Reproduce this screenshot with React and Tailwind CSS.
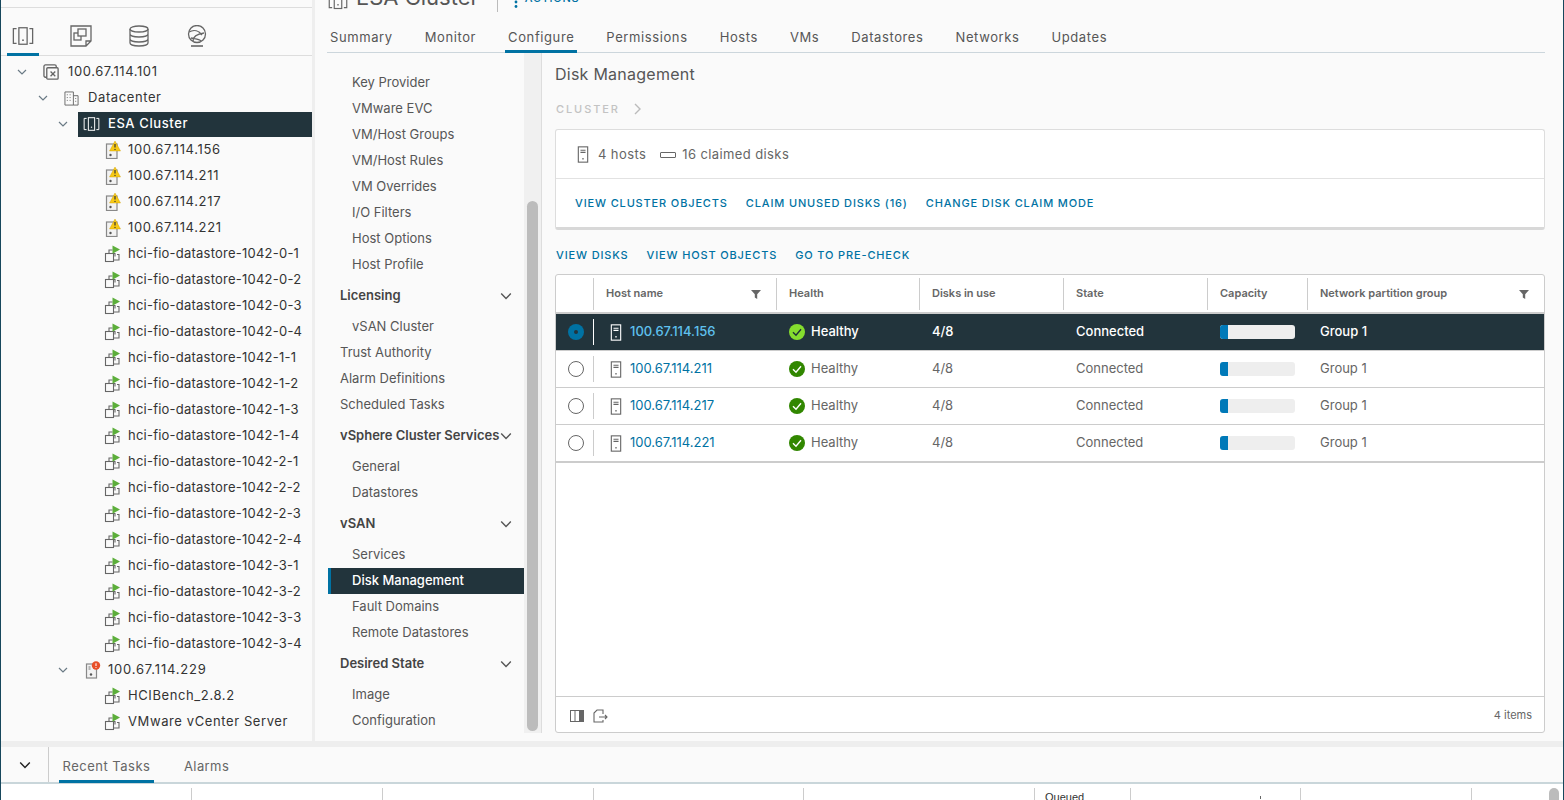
import React from "react";

const font = { fontFamily: '"Inter", "Open Sans", sans-serif' };

const Chevron = ({ className = "w-[10px] h-[10px] text-[#6a7a85]" }) => (
  <svg viewBox="0 0 10 10" className={className} fill="none" stroke="currentColor" strokeWidth="1.2">
    <path d="M1 3l4 4 4-4" />
  </svg>
);

const Host = ({ className = "w-[14px] h-[20px] text-[#666]" }) => (
  <svg viewBox="0 0 14 20" className={className} fill="none" stroke="currentColor" strokeWidth="1.3">
    <rect x="1.5" y="1" width="11" height="18" />
    <path d="M4 5h6M4 7.5h6" />
    <circle cx="7" cy="15" r="1" fill="currentColor" stroke="none" />
  </svg>
);

const ClusterIcon = ({ className, color = "#666" }) => (
  <svg viewBox="0 0 24 20" className={className} fill="none" stroke={color} strokeWidth="1.4">
    <rect x="7.5" y="1" width="9" height="18" />
    <circle cx="12" cy="14.5" r="1" fill={color} stroke="none" />
    <path d="M5 2H1.5v16H5M19 2h3.5v16H19" />
  </svg>
);

const WarnHost = () => (
  <svg viewBox="0 0 18 18" className="w-[18px] h-[18px]">
    <rect x="2.5" y="3" width="10.5" height="14.5" fill="#f2f2f2" stroke="#888" strokeWidth="1.2" />
    <circle cx="6.5" cy="14" r="1.2" fill="#555" />
    <path d="M11 0l5.5 10h-11z" fill="#f7c914" stroke="#c99a00" strokeWidth="0.4" />
    <path d="M11 3v3.6" stroke="#333" strokeWidth="1.2" />
    <circle cx="11" cy="8.4" r="0.7" fill="#333" />
  </svg>
);

const ErrorHost = () => (
  <svg viewBox="0 0 18 18" className="w-[18px] h-[18px]">
    <rect x="2.5" y="3" width="10" height="14" fill="#f2f2f2" stroke="#888" strokeWidth="1.2" />
    <path d="M4.5 6h2M4.5 8h2" stroke="#777" />
    <circle cx="7" cy="13.5" r="1.2" fill="#555" />
    <circle cx="12" cy="4.5" r="4.2" fill="#e8502a" />
    <path d="M12 2.2v2.8" stroke="#fff" strokeWidth="1.1" />
    <circle cx="12" cy="6.5" r="0.6" fill="#fff" />
  </svg>
);

const VmIcon = () => (
  <svg viewBox="0 0 18 18" className="w-[18px] h-[18px]" fill="none">
    <path d="M5 8V5h3.5M13 9.5h2V15H9.5" stroke="#666" strokeWidth="1.1" />
    <rect x="1.5" y="8.5" width="8" height="8" fill="#fafafa" stroke="#666" strokeWidth="1.1" />
    <path d="M5 8.5h6v3" stroke="#666" strokeWidth="1.1" />
    <path d="M8.5 0.5l7.5 4-7.5 4.2z" fill="#5cae3a" />
  </svg>
);

const HealthIcon = ({ light }) => (
  <svg viewBox="0 0 16 16" className="w-[16px] h-[16px]">
    <circle cx="8" cy="8" r="8" fill={light ? "#85dd2e" : "#318700"} />
    <path d="M4 8.2l3 3 5-6" fill="none" stroke={light ? "#1f2f38" : "#fff"} strokeWidth="1.4" />
  </svg>
);

const Filter = () => (
  <svg viewBox="0 0 10 10" className="w-[10px] h-[10px]" fill="#666">
    <path d="M0 1h10L6.2 5.2V10L3.8 8.6V5.2z" />
  </svg>
);

const tree = [
  { label: "100.67.114.156", icon: <WarnHost />, track: "tracking-[0.65px]" },
  { label: "100.67.114.211", icon: <WarnHost />, track: "tracking-[0.65px]" },
  { label: "100.67.114.217", icon: <WarnHost />, track: "tracking-[0.65px]" },
  { label: "100.67.114.221", icon: <WarnHost />, track: "tracking-[0.65px]" },
  ...[
    "0-1", "0-2", "0-3", "0-4", "1-1", "1-2", "1-3", "1-4",
    "2-1", "2-2", "2-3", "2-4", "3-1", "3-2", "3-3", "3-4",
  ].map((n) => ({ label: "hci-fio-datastore-1042-" + n, icon: <VmIcon />, track: "tracking-[0.23px]" })),
];

const tabs = ["Summary", "Monitor", "Configure", "Permissions", "Hosts", "VMs", "Datastores", "Networks", "Updates"];

const nav = [
  { label: "Key Provider" },
  { label: "VMware EVC" },
  { label: "VM/Host Groups" },
  { label: "VM/Host Rules" },
  { label: "VM Overrides" },
  { label: "I/O Filters" },
  { label: "Host Options" },
  { label: "Host Profile" },
  { label: "Licensing", head: true },
  { label: "vSAN Cluster" },
  { label: "Trust Authority", top: true },
  { label: "Alarm Definitions", top: true },
  { label: "Scheduled Tasks", top: true },
  { label: "vSphere Cluster Services", head: true },
  { label: "General" },
  { label: "Datastores" },
  { label: "vSAN", head: true },
  { label: "Services" },
  { label: "Disk Management", active: true },
  { label: "Fault Domains" },
  { label: "Remote Datastores" },
  { label: "Desired State", head: true },
  { label: "Image" },
  { label: "Configuration" },
];

const rows = ["100.67.114.156", "100.67.114.211", "100.67.114.217", "100.67.114.221"];

const colW = ["w-[37px]", "w-[183px]", "w-[143px]", "w-[144px]", "w-[144px]", "w-[100px]", "flex-1"];

const taskCols = ["w-[191px]", "w-[191px]", "w-[211px]", "w-[210px]", "w-[231px]"];

const HeadCell = ({ w, label, filter }) => (
  <div className={`${w} h-[32px] border-l border-[#ccc] pl-3 pr-[15px] flex items-center justify-between`}>
    <span className="text-[11px] font-semibold text-[#666]">{label}</span>
    {filter && <Filter />}
  </div>
);

function Row({ host, selected }) {
  const text = selected ? "text-white" : "text-[#666]";
  return (
    <div className={`h-[37px] flex items-center border-b border-[#ccc] text-[13px] ${selected ? "bg-[#22343c] font-[450]" : "bg-white"} ${text}`}>
      <div className="w-[37px] h-full pl-[2px] flex items-center justify-center">
        {selected ? (
          <div className="w-[16px] h-[16px] rounded-full bg-[#0072a3] flex items-center justify-center">
            <div className="w-[4px] h-[4px] rounded-full bg-[#22343c]" />
          </div>
        ) : (
          <div className="w-[16px] h-[16px] rounded-full border border-[#666] bg-white" />
        )}
      </div>
      <div className={`${colW[1]} h-[26px] pl-[16px] flex items-center gap-[8px] ${selected ? "border-l border-white" : "border-l border-[#ccc]"}`}>
        <Host className={`w-[12px] h-[17px] ${selected ? "text-white" : "text-[#666]"}`} />
        <span className={selected ? "text-[#5fc1ee]" : "text-[#0072a3]"}>{host}</span>
      </div>
      <div className={`${colW[2]} pl-[13px] flex items-center gap-[6px]`}>
        <HealthIcon light={selected} />
        <span>Healthy</span>
      </div>
      <div className={`${colW[3]} pl-[13px]`}>4/8</div>
      <div className={`${colW[4]} pl-[13px]`}>Connected</div>
      <div className={`${colW[5]} pl-[13px]`}>
        <div className="w-[75px] h-[14px] rounded-[3px] bg-[#eee] overflow-hidden">
          <div className="w-[8px] h-full bg-[#0079b8]" />
        </div>
      </div>
      <div className="flex-1 pl-[13px]">Group 1</div>
    </div>
  );
}

export default function App() {
  return (
    <div className="w-[1564px] h-[800px] overflow-hidden flex flex-col bg-[#fafafa] border-x border-[#17475c] text-[#565656]" style={font}>
      <div className="h-[741px] flex overflow-hidden">
        {/* inventory tree */}
        <div className="w-[311px] shrink-0 pt-[7px]">
          <div className="h-[49px] border-t border-b border-[#ddd] flex pl-[6px] gap-[26px]">
            <div className="w-[32px] h-[48px] pt-[18px] border-b-[3px] border-[#0072a3] flex justify-center">
              <ClusterIcon className="w-[22px] h-[20px]" />
            </div>
            <div className="w-[32px] h-[48px] pt-[17px] flex justify-center">
              <svg viewBox="0 0 22 22" className="w-[22px] h-[22px]" fill="none" stroke="#666" strokeWidth="1.3">
                <path d="M1 1h20v15l-5 5H1zM16 21v-5h5" />
                <rect x="4" y="8" width="7" height="7" />
                <rect x="8" y="4" width="8" height="7" fill="#fafafa" />
              </svg>
            </div>
            <div className="w-[32px] h-[48px] pt-[17px] flex justify-center">
              <svg viewBox="0 0 20 22" className="w-[20px] h-[22px]" fill="none" stroke="#666" strokeWidth="1.3">
                <ellipse cx="10" cy="4" rx="9" ry="3" />
                <path d="M1 4v14c0 1.7 4 3 9 3s9-1.3 9-3V4M1 9c0 1.7 4 3 9 3s9-1.3 9-3M1 14c0 1.7 4 3 9 3s9-1.3 9-3" />
              </svg>
            </div>
            <div className="w-[32px] h-[48px] pt-[17px] flex justify-center">
              <svg viewBox="0 0 20 22" className="w-[20px] h-[22px]" fill="none" stroke="#666" strokeWidth="1.3">
                <circle cx="10" cy="9" r="8.5" />
                <path d="M2 7c5-3 10-1 13 3M6 16c0-4 4-7 11-8M4 13c4 1 8 1 10 3" />
                <path d="M4 21h12" strokeWidth="1.6" />
              </svg>
            </div>
          </div>
          <div className="text-[13px] text-[#333] tracking-[0.6px]">
            <div className="h-[26px] mt-[3px] flex items-center pl-[16px]">
              <Chevron />
              <span className="ml-[16px] w-[18px]">
                <svg viewBox="0 0 18 18" className="w-[17px] h-[17px]" fill="none" stroke="#666" strokeWidth="1.4">
                  <rect x="1" y="1" width="13" height="13" rx="1.5" />
                  <rect x="4" y="4" width="12" height="12" rx="1" fill="#fafafa" />
                  <path d="M8 8l5 5M13 8l-5 5" />
                </svg>
              </span>
              <span className="ml-[7px]">100.67.114.101</span>
            </div>
            <div className="h-[26px] flex items-center pl-[37px]">
              <Chevron />
              <svg viewBox="0 0 16 16" className="w-[15px] h-[15px] ml-[16px]" fill="none" stroke="#666">
                <path d="M1 1h9v14H1zM10 5h5v10h-5M3 4h1M6 4h1M3 7h1M6 7h1M3 10h1M6 10h1M12 8h1M12 11h1" />
              </svg>
              <span className="ml-[9px]">Datacenter</span>
            </div>
            <div className="h-[26px] flex items-center pl-[57px]">
              <Chevron />
              <div className="ml-[10px] flex-1 h-[25px] bg-[#22343c] text-white font-[450] flex items-center pl-[5px]">
                <ClusterIcon className="w-[17px] h-[14px]" color="#fff" />
                <span className="ml-[8px]">ESA Cluster</span>
              </div>
            </div>
            {tree.map((t) => (
              <div key={t.label} className="h-[26px] flex items-center pl-[103px]">
                <span className="w-[18px]">{t.icon}</span>
                <span className={`ml-[6px] truncate ${t.track}`}>{t.label}</span>
              </div>
            ))}
            <div className="h-[26px] flex items-center pl-[57px]">
              <Chevron />
              <span className="ml-[16px] w-[18px]"><ErrorHost /></span>
              <span className="ml-[6px] tracking-[0.8px]">100.67.114.229</span>
            </div>
            {["HCIBench_2.8.2", "VMware vCenter Server"].map((t) => (
              <div key={t} className="h-[26px] flex items-center pl-[103px]">
                <span className="w-[18px]"><VmIcon /></span>
                <span className="ml-[6px]">{t}</span>
              </div>
            ))}
          </div>
        </div>
        <div className="w-[3px] bg-[#eee] mr-[13px]" />

        {/* main */}
        <div className="flex-1 min-w-0 flex flex-col">
          <div className="h-[12px] shrink-0 overflow-hidden flex items-end">
            <ClusterIcon className="w-[20px] h-[18px] mb-[2px] shrink-0" />
            <span className="text-[22px] leading-[26px] ml-[8px] mb-[2px] whitespace-nowrap text-[#565656]">ESA Cluster</span>
            <div className="w-px h-[24px] bg-[#bbb] ml-[18px] shrink-0" />
            <svg viewBox="0 0 4 12" className="w-[4px] h-[12px] ml-[16px] mb-[4px] shrink-0" fill="#0072a3">
              <circle cx="2" cy="1.5" r="1.4" />
              <circle cx="2" cy="6" r="1.4" />
              <circle cx="2" cy="10.5" r="1.4" />
            </svg>
            <span className="text-[#0072a3] text-[11px] tracking-[0.7px] ml-[7px] mb-[6px] font-medium whitespace-nowrap">ACTIONS</span>
          </div>
          <div className="h-[41px] -ml-[1px] border-b border-[#ccd6dc] flex items-end text-[13px] tracking-[0.6px] mr-[18px]">
            {tabs.map((t) => (
              <div key={t} className={`px-[3px] mr-[26px] h-[31px] pt-[3px] flex items-center -mb-[1px] border-b-[3px] ${t === "Configure" ? "border-[#0072a3]" : "border-transparent"}`}>
                {t}
              </div>
            ))}
          </div>
          <div className="flex-1 min-h-0 flex">
            {/* settings nav */}
            <div className="w-[196px] shrink-0 pt-[17px] text-[13px]">
              {nav.map((n) => n.head ? (
                <div key={n.label} className="h-[26px] mt-[5px] flex items-center justify-between pl-[12px] pr-[12px] font-semibold text-[#444]">
                  <span className="whitespace-nowrap">{n.label}</span>
                  <Chevron className="w-[12px] h-[12px] text-[#555] shrink-0" />
                </div>
              ) : (
                <div
                  key={n.label}
                  className={`h-[26px] flex items-center ${n.top ? "pl-[12px]" : "pl-[24px]"} ${n.active ? "bg-[#22343c] text-white font-[450] border-l-[3px] border-[#0072a3] !pl-[21px]" : ""} ${n.label === "vSAN Cluster" || n.label === "General" || n.label === "Services" || n.label === "Image" ? "mt-[5px]" : ""}`}
                >
                  {n.label}
                </div>
              ))}
            </div>
            {/* scrollbar */}
            <div className="w-[18px] shrink-0 mb-[8px] bg-[#f0f0f0] border-r border-[#ddd] flex flex-col pt-[148px] pb-[2px] items-center">
              <div className="w-[11px] flex-1 rounded-[6px] bg-[#bcbcbc]" />
            </div>
            {/* content */}
            <div className="flex-1 min-w-0 pl-[13px] pr-[18px] flex flex-col">
              <div className="text-[16px] tracking-[0.25px] text-[#565656] mt-[9px] h-[24px] leading-[24px]">Disk Management</div>
              <div className="mt-[13px] h-[20px] ml-[1px] flex items-center gap-[14px] text-[11px] tracking-[1.9px] text-[#c3c3c3] font-medium">
                CLUSTER
                <svg viewBox="0 0 8 12" className="w-[8px] h-[12px]" fill="none" stroke="#bbb" strokeWidth="1.4"><path d="M1 1l5 5-5 5" /></svg>
              </div>
              <div className="mt-[10px] h-[101px] bg-white border border-[#ddd] border-b-[3px] border-b-[#d8d8d8] rounded-[3px]">
                <div className="h-[49px] pt-[1px] border-b border-[#e2e2e2] flex items-center pl-[21px] text-[13px] tracking-[0.4px] text-[#666]">
                  <Host className="w-[12px] h-[17px] text-[#666]" />
                  <span className="ml-[9px]">4 hosts</span>
                  <div className="w-[16px] h-[6px] border border-[#666] rounded-[1px] ml-[14px]" />
                  <span className="ml-[6px]">16 claimed disks</span>
                </div>
                <div className="h-[49px] flex items-center pl-[19px] gap-[18px] text-[11px] tracking-[0.85px] font-medium text-[#0072a3]">
                  <span>VIEW CLUSTER OBJECTS</span>
                  <span>CLAIM UNUSED DISKS (16)</span>
                  <span>CHANGE DISK CLAIM MODE</span>
                </div>
              </div>
              <div className="mt-[17px] ml-[1px] h-[16px] flex items-center gap-[18px] text-[11px] tracking-[0.85px] font-medium text-[#0072a3]">
                <span>VIEW DISKS</span>
                <span>VIEW HOST OBJECTS</span>
                <span>GO TO PRE-CHECK</span>
              </div>
              <div className="mt-[11px] h-[459px] bg-white border border-[#ccc] rounded-[3px] flex flex-col">
                <div className="h-[39px] flex items-center border-b-2 border-[#ccc]">
                  <div className="w-[37px]" />
                  <HeadCell w={colW[1]} label="Host name" filter />
                  <HeadCell w={colW[2]} label="Health" />
                  <HeadCell w={colW[3]} label="Disks in use" />
                  <HeadCell w={colW[4]} label="State" />
                  <HeadCell w={colW[5]} label="Capacity" />
                  <HeadCell w={colW[6]} label="Network partition group" filter />
                </div>
                {rows.map((r, i) => <Row key={r} host={r} selected={i === 0} />)}
                <div className="h-px bg-[#ccc]" />
                <div className="flex-1" />
                <div className="h-[36px] pt-[2px] border-t border-[#ccc] flex items-center pl-[14px] pr-[12px]">
                  <svg viewBox="0 0 14 12" className="w-[14px] h-[12px]" fill="none" stroke="#666">
                    <rect x="0.5" y="0.5" width="13" height="11" />
                    <path d="M5 0v12" />
                    <rect x="9" y="0" width="5" height="12" fill="#666" stroke="none" />
                  </svg>
                  <svg viewBox="0 0 15 14" className="w-[15px] h-[14px] ml-[9px]" fill="none" stroke="#666" strokeWidth="1.1">
                    <path d="M10 5V1H4L1 4v9h9v-2M6 8h8M12 6l2 2-2 2" />
                  </svg>
                  <span className="ml-auto text-[11px] text-[#666]">4 items</span>
                </div>
              </div>
            </div>
          </div>
        </div>
      </div>

      {/* recent tasks */}
      <div className="h-[6px] bg-[#eee]" />
      <div className="h-[37px] border-b-2 border-[#c9d6da] flex text-[13px] text-[#666]">
        <div className="w-[48px] h-[35px] border-r border-[#ccc] flex items-center justify-center">
          <Chevron className="w-[12px] h-[12px] text-[#222]" />
        </div>
        <div className="ml-[10px] w-[95px] h-[36px] pt-[6px] border-b-[3px] border-[#0072a3] flex items-center justify-center tracking-[0.5px]">Recent Tasks</div>
        <div className="ml-[30px] h-[36px] pt-[3px] flex items-center tracking-[0.4px]">Alarms</div>
      </div>
      <div className="flex-1 min-h-0 bg-white flex pt-[4px] pr-[4px]">
        {taskCols.map((w) => (
          <div key={w} className={`${w} h-full border-r border-[#ccc] shrink-0`} />
        ))}
        <div className="w-[96px] h-full border-r border-[#ccc] shrink-0 pl-[10px] text-[11px] leading-[18px] text-[#333]" style={{ fontFamily: '"Liberation Sans", sans-serif' }}>
          Queued
        </div>
        <div className="w-[170px] h-full border-r border-[#ccc] shrink-0 pl-[129px] pt-[8px]">
          <div className="w-px h-[3px] bg-[#666]" />
        </div>
        <div className="w-[171px] h-full border-r border-[#ccc] shrink-0" />
        <div className="flex-1" />
        <div className="w-[10px] h-[30px] rounded-[5px] bg-[#bcbcbc]" />
      </div>
    </div>
  );
}
